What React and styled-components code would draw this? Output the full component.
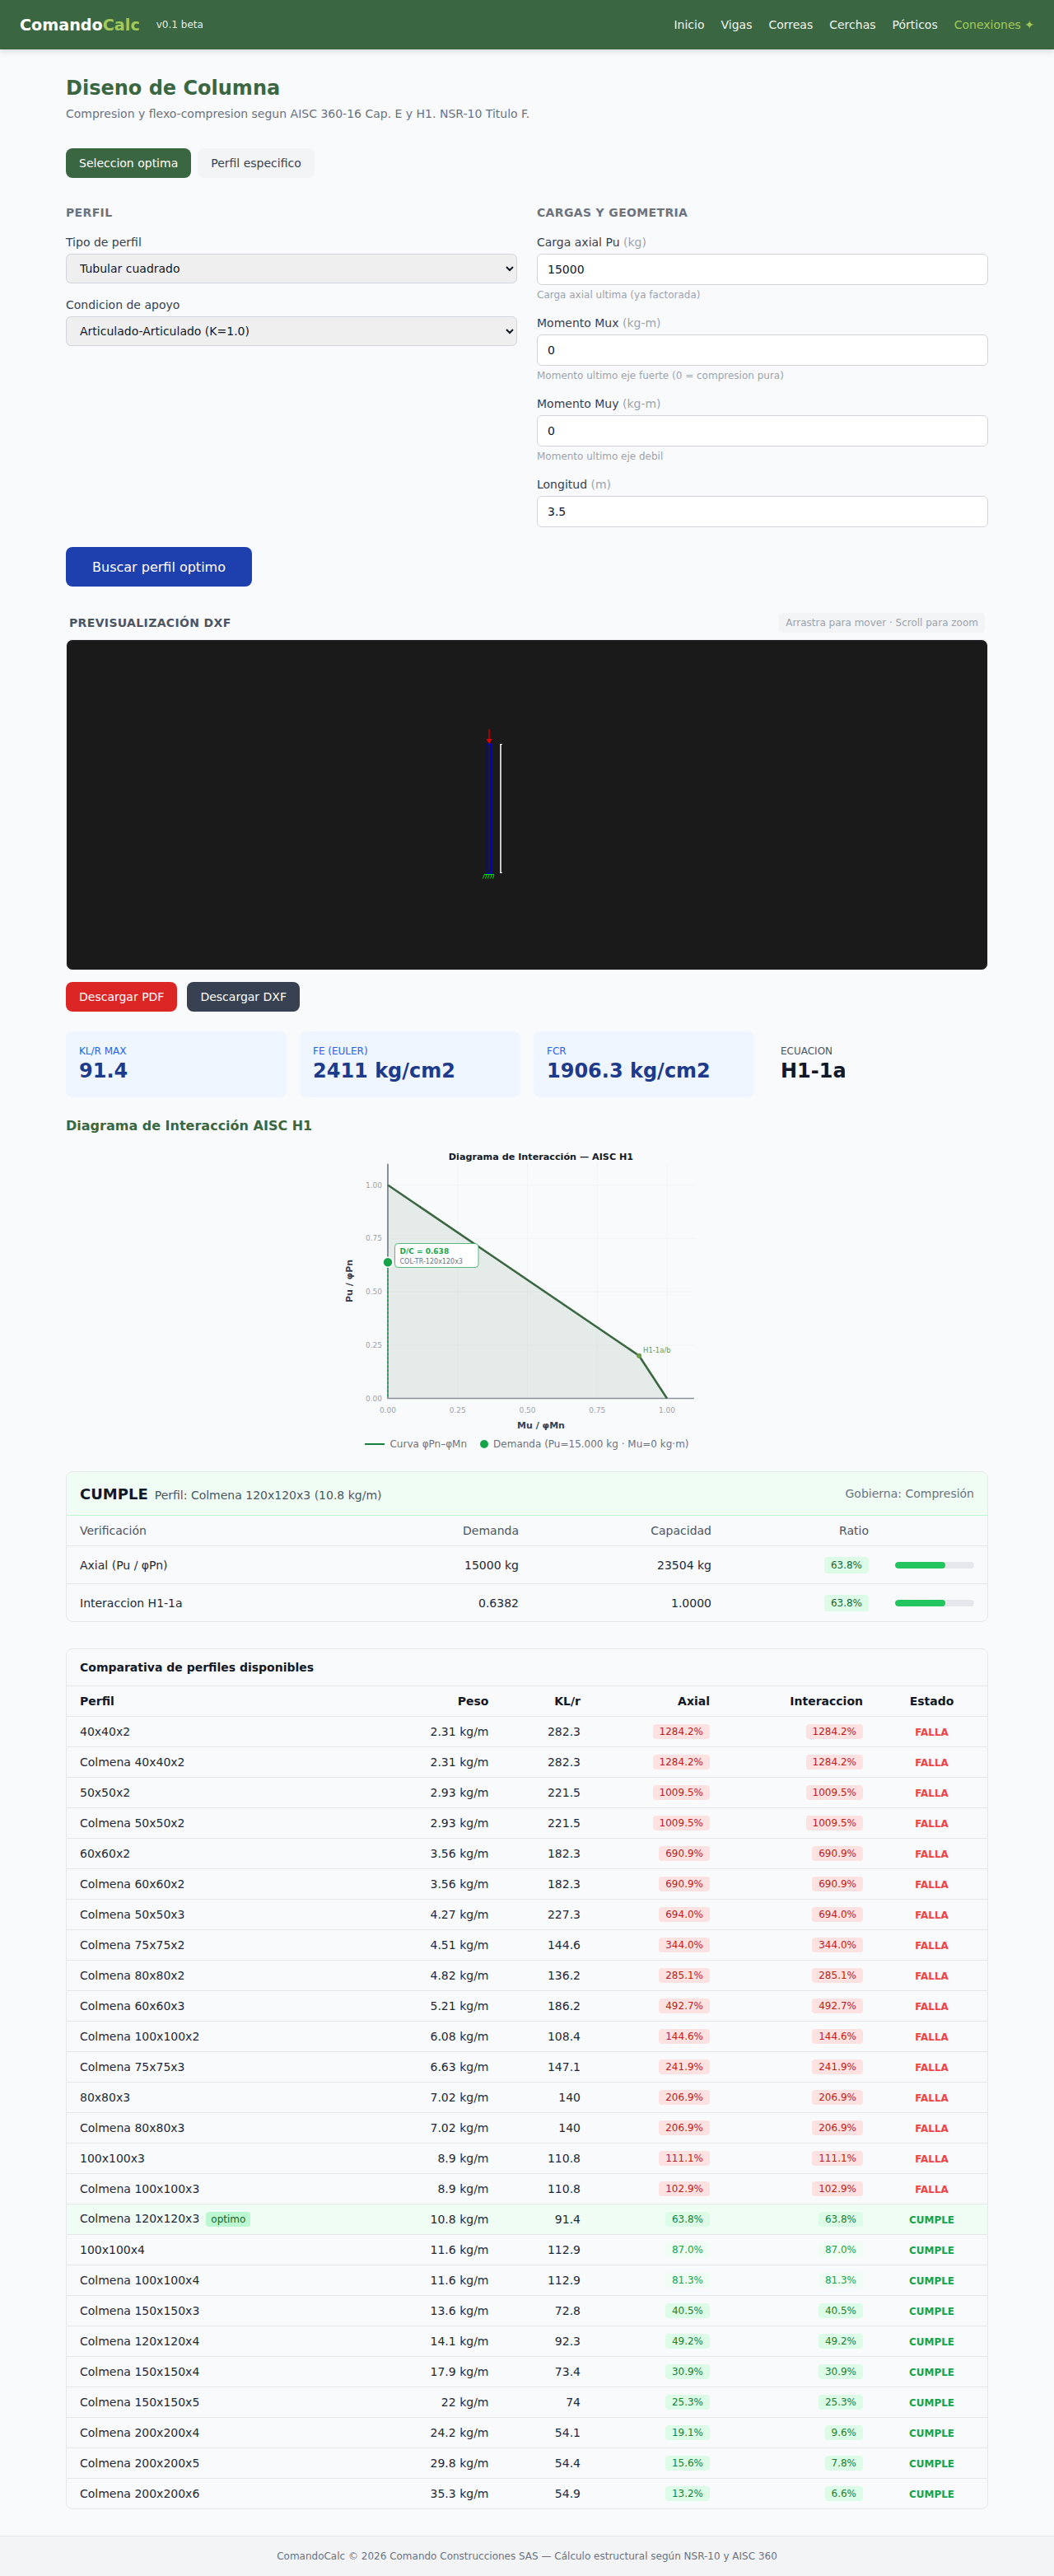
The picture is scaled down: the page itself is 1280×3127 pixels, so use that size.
import React from "react";
import styled, { createGlobalStyle } from "styled-components";

const GlobalStyle = createGlobalStyle`
  * {
    box-sizing: border-box;
  }
  body {
    margin: 0;
    background: #f9fafb;
    color: #111827;
    font-family: "DejaVu Sans", sans-serif;
  }
`;

const profiles = [
  ["40x40x2", "2.31", "282.3", 1284.2, 1284.2],
  ["Colmena 40x40x2", "2.31", "282.3", 1284.2, 1284.2],
  ["50x50x2", "2.93", "221.5", 1009.5, 1009.5],
  ["Colmena 50x50x2", "2.93", "221.5", 1009.5, 1009.5],
  ["60x60x2", "3.56", "182.3", 690.9, 690.9],
  ["Colmena 60x60x2", "3.56", "182.3", 690.9, 690.9],
  ["Colmena 50x50x3", "4.27", "227.3", 694.0, 694.0],
  ["Colmena 75x75x2", "4.51", "144.6", 344.0, 344.0],
  ["Colmena 80x80x2", "4.82", "136.2", 285.1, 285.1],
  ["Colmena 60x60x3", "5.21", "186.2", 492.7, 492.7],
  ["Colmena 100x100x2", "6.08", "108.4", 144.6, 144.6],
  ["Colmena 75x75x3", "6.63", "147.1", 241.9, 241.9],
  ["80x80x3", "7.02", "140", 206.9, 206.9],
  ["Colmena 80x80x3", "7.02", "140", 206.9, 206.9],
  ["100x100x3", "8.9", "110.8", 111.1, 111.1],
  ["Colmena 100x100x3", "8.9", "110.8", 102.9, 102.9],
  ["Colmena 120x120x3", "10.8", "91.4", 63.8, 63.8, true],
  ["100x100x4", "11.6", "112.9", 87.0, 87.0],
  ["Colmena 100x100x4", "11.6", "112.9", 81.3, 81.3],
  ["Colmena 150x150x3", "13.6", "72.8", 40.5, 40.5],
  ["Colmena 120x120x4", "14.1", "92.3", 49.2, 49.2],
  ["Colmena 150x150x4", "17.9", "73.4", 30.9, 30.9],
  ["Colmena 150x150x5", "22", "74", 25.3, 25.3],
  ["Colmena 200x200x4", "24.2", "54.1", 19.1, 9.6],
  ["Colmena 200x200x5", "29.8", "54.4", 15.6, 7.8],
  ["Colmena 200x200x6", "35.3", "54.9", 13.2, 6.6],
];

function App() {
  return (
    <>
      <GlobalStyle />
      <Header>
        <Brand>
          <Logo>
            Comando<span>Calc</span>
          </Logo>
          <Version>v0.1 beta</Version>
        </Brand>
        <Nav>
          <a>Inicio</a>
          <a>Vigas</a>
          <a>Correas</a>
          <a>Cerchas</a>
          <a>Pórticos</a>
          <NavAccent>Conexiones ✦</NavAccent>
        </Nav>
      </Header>

      <Main>
        <Title>Diseno de Columna</Title>
        <Subtitle>
          Compresion y flexo-compresion segun AISC 360-16 Cap. E y H1. NSR-10
          Titulo F.
        </Subtitle>

        <Tabs>
          <Tab $active>Seleccion optima</Tab>
          <Tab>Perfil especifico</Tab>
        </Tabs>

        <FormGrid>
          <div>
            <SectionLabel>Perfil</SectionLabel>
            <Field>
              <Label>Tipo de perfil</Label>
              <Select defaultValue="tc">
                <option value="tc">Tubular cuadrado</option>
              </Select>
            </Field>
            <Field>
              <Label>Condicion de apoyo</Label>
              <Select defaultValue="aa">
                <option value="aa">Articulado-Articulado (K=1.0)</option>
              </Select>
            </Field>
          </div>
          <div>
            <SectionLabel>Cargas y geometria</SectionLabel>
            <Field>
              <Label>
                Carga axial Pu <Unit>(kg)</Unit>
              </Label>
              <Input defaultValue="15000" />
              <Hint>Carga axial ultima (ya factorada)</Hint>
            </Field>
            <Field>
              <Label>
                Momento Mux <Unit>(kg-m)</Unit>
              </Label>
              <Input defaultValue="0" />
              <Hint>Momento ultimo eje fuerte (0 = compresion pura)</Hint>
            </Field>
            <Field>
              <Label>
                Momento Muy <Unit>(kg-m)</Unit>
              </Label>
              <Input defaultValue="0" />
              <Hint>Momento ultimo eje debil</Hint>
            </Field>
            <Field>
              <Label>
                Longitud <Unit>(m)</Unit>
              </Label>
              <Input defaultValue="3.5" />
            </Field>
          </div>
        </FormGrid>

        <SearchButton>Buscar perfil optimo</SearchButton>

        <PreviewHead>
          <PreviewTitle>Previsualización DXF</PreviewTitle>
          <PreviewHint>Arrastra para mover · Scroll para zoom</PreviewHint>
        </PreviewHead>
        <Canvas>
          <svg width="1118" height="400" viewBox="81 777 1118 400">
            <line x1="594" y1="885" x2="594" y2="898" stroke="#a00000" strokeWidth="2" />
            <polygon points="590.5,897 597.5,897 594,903" fill="#e00000" />
            <rect x="591.5" y="903.5" width="5" height="157" fill="none" stroke="#0000c8" strokeWidth="1.5" />
            <line x1="608" y1="903" x2="608" y2="1060" stroke="#c8c8c8" strokeWidth="2" />
            <line x1="607" y1="903.5" x2="610" y2="903.5" stroke="#ffffff" />
            <line x1="607" y1="1059.5" x2="610" y2="1059.5" stroke="#ffffff" />
            <g stroke="#00e000" strokeWidth="1">
              <line x1="588" y1="1061.5" x2="600" y2="1061.5" />
              <line x1="588" y1="1062" x2="586.5" y2="1066.5" />
              <line x1="591" y1="1062" x2="589.5" y2="1066.5" />
              <line x1="594" y1="1062" x2="592.5" y2="1066.5" />
              <line x1="597" y1="1062" x2="595.5" y2="1066.5" />
              <line x1="600" y1="1062" x2="598.5" y2="1066.5" />
            </g>
          </svg>
        </Canvas>

        <Downloads>
          <DownloadButton $bg="#dc2626">Descargar PDF</DownloadButton>
          <DownloadButton $bg="#374151">Descargar DXF</DownloadButton>
        </Downloads>

        <Stats>
          <Stat>
            <StatLabel>KL/r max</StatLabel>
            <StatValue>91.4</StatValue>
          </Stat>
          <Stat>
            <StatLabel>Fe (Euler)</StatLabel>
            <StatValue>2411 kg/cm2</StatValue>
          </Stat>
          <Stat>
            <StatLabel>Fcr</StatLabel>
            <StatValue>1906.3 kg/cm2</StatValue>
          </Stat>
          <Stat $plain>
            <StatLabel $plain>Ecuacion</StatLabel>
            <StatValue $plain>H1-1a</StatValue>
          </Stat>
        </Stats>

        <DiagramTitle>Diagrama de Interacción AISC H1</DiagramTitle>
        <InteractionChart />
        <Legend>
          <LegendItem>
            <LegendLine />
            Curva φPn–φMn
          </LegendItem>
          <LegendItem>
            <LegendDot />
            Demanda (Pu=15.000 kg · Mu=0 kg·m)
          </LegendItem>
        </Legend>

        <ResultCard>
          <ResultHead>
            <ResultStatus>
              <strong>CUMPLE</strong>
              <span>Perfil: Colmena 120x120x3 (10.8 kg/m)</span>
            </ResultStatus>
            <Governs>Gobierna: Compresión</Governs>
          </ResultHead>
          <CheckTable>
            <colgroup>
              <col />
              <col style={{ width: 155 }} />
              <col style={{ width: 234 }} />
              <col style={{ width: 191 }} />
              <col style={{ width: 128 }} />
            </colgroup>
            <thead>
              <tr>
                <th>Verificación</th>
                <th>Demanda</th>
                <th>Capacidad</th>
                <th>Ratio</th>
                <th />
              </tr>
            </thead>
            <tbody>
              <tr>
                <td>Axial (Pu / φPn)</td>
                <td>15000 kg</td>
                <td>23504 kg</td>
                <td>
                  <CheckPill>63.8%</CheckPill>
                </td>
                <td>
                  <BarTrack>
                    <BarFill style={{ width: "63.8%" }} />
                  </BarTrack>
                </td>
              </tr>
              <tr>
                <td>Interaccion H1-1a</td>
                <td>0.6382</td>
                <td>1.0000</td>
                <td>
                  <CheckPill>63.8%</CheckPill>
                </td>
                <td>
                  <BarTrack>
                    <BarFill style={{ width: "63.8%" }} />
                  </BarTrack>
                </td>
              </tr>
            </tbody>
          </CheckTable>
        </ResultCard>

        <CompareCard>
          <CompareTitle>Comparativa de perfiles disponibles</CompareTitle>
          <CompareTable>
            <colgroup>
              <col />
              <col style={{ width: 128.5 }} />
              <col style={{ width: 111.5 }} />
              <col style={{ width: 157 }} />
              <col style={{ width: 186 }} />
              <col style={{ width: 135 }} />
            </colgroup>
            <thead>
              <tr>
                <th>Perfil</th>
                <th>Peso</th>
                <th>KL/r</th>
                <th>Axial</th>
                <th>Interaccion</th>
                <th>Estado</th>
              </tr>
            </thead>
            <tbody>
              {profiles.map(([name, weight, klr, axial, inter, best]) => (
                <ProfileRow key={name} $best={best}>
                  <td>
                    {name}
                    {best && <BestBadge>optimo</BestBadge>}
                  </td>
                  <td>{weight} kg/m</td>
                  <td>{klr}</td>
                  <td>
                    <RatioPill $value={axial}>{axial.toFixed(1)}%</RatioPill>
                  </td>
                  <td>
                    <RatioPill $value={inter}>{inter.toFixed(1)}%</RatioPill>
                  </td>
                  <td>
                    <Status $ok={axial <= 100}>
                      {axial <= 100 ? "CUMPLE" : "FALLA"}
                    </Status>
                  </td>
                </ProfileRow>
              ))}
            </tbody>
          </CompareTable>
        </CompareCard>
      </Main>

      <Footer>
        ComandoCalc © 2026 Comando Construcciones SAS — Cálculo estructural según
        NSR-10 y AISC 360
      </Footer>
    </>
  );
}

// coordinates of the plot inside the 560x350 svg
const px = (v) => 111 + v * 339;
const py = (v) => 307.5 - v * 259;

function InteractionChart() {
  const ticks = [0, 0.25, 0.5, 0.75, 1];
  return (
    <ChartSvg width="560" height="350" viewBox="0 0 560 350">
      <text x="297" y="18" textAnchor="middle" fontSize="11.2" fontWeight="700" fill="#111827">
        Diagrama de Interacción — AISC H1
      </text>
      {ticks.map((t) => (
        <g key={t}>
          {t > 0 && (
            <>
              <line x1={px(t)} y1="22.7" x2={px(t)} y2="307.5" stroke="#f3f4f6" />
              <line x1="111" y1={py(t)} x2="483" y2={py(t)} stroke="#f3f4f6" />
            </>
          )}
          <text x={px(t)} y="325" textAnchor="middle" fontSize="9" fill="#9ca3af">
            {t.toFixed(2)}
          </text>
          <text x="104" y={py(t) + 3} textAnchor="end" fontSize="9" fill="#9ca3af">
            {t.toFixed(2)}
          </text>
        </g>
      ))}
      <polygon
        points={`${px(0)},${py(1)} ${px(0.9)},${py(0.2)} ${px(1)},${py(0)} ${px(0)},${py(0)}`}
        fill="#3a6741"
        fillOpacity="0.1"
      />
      <line x1="111" y1="22.7" x2="111" y2="307.5" stroke="#8a8f9c" strokeWidth="2" />
      <line x1="111" y1="307.5" x2="483" y2="307.5" stroke="#8a8f9c" strokeWidth="1.5" />
      <polyline
        points={`${px(0)},${py(1)} ${px(0.9)},${py(0.2)} ${px(1)},${py(0)}`}
        fill="none"
        stroke="#3a6741"
        strokeWidth="2.5"
      />
      <line x1="111" y1={py(0.638)} x2="111" y2="307.5" stroke="#16a34a" strokeWidth="1.5" strokeDasharray="3 2" />
      <circle cx={px(0.9)} cy={py(0.2)} r="3" fill="#6a9a4a" />
      <text x="421" y="252" fontSize="8.5" fill="#6a9a4a">
        H1-1a/b
      </text>
      <circle cx="111" cy={py(0.638)} r="6" fill="#16a34a" stroke="#fff" strokeWidth="1.5" />
      <rect x="119.5" y="119.5" width="101.5" height="29" rx="4" fill="#fff" stroke="#16a34a" strokeOpacity="0.7" />
      <text x="125.5" y="132" fontSize="9" fontWeight="700" fill="#16a34a">
        D/C = 0.638
      </text>
      <text x="125.5" y="143.5" fontSize="8" fill="#6b7280">
        COL-TR-120x120x3
      </text>
      <text x="297" y="344" textAnchor="middle" fontSize="11" fontWeight="700" fill="#374151">
        Mu / φMn
      </text>
      <text
        transform={`translate(68 165) rotate(-90)`}
        textAnchor="middle"
        fontSize="11"
        fontWeight="700"
        fill="#374151"
      >
        Pu / φPn
      </text>
    </ChartSvg>
  );
}

const Header = styled.header`
  height: 60px;
  background: #3a6741;
  display: flex;
  justify-content: space-between;
  align-items: center;
  padding: 0 24px;
  box-shadow: 0 2px 8px rgba(0, 0, 0, 0.15);
`;
const Brand = styled.div`
  display: flex;
  align-items: center;
  gap: 20px;
`;
const Logo = styled.div`
  color: #fff;
  font-size: 19.2px;
  font-weight: 700;
  span {
    color: #a3c95a;
  }
`;
const Version = styled.span`
  color: rgba(255, 255, 255, 0.9);
  font-size: 12px;
`;
const Nav = styled.nav`
  display: flex;
  gap: 20px;
  font-size: 14px;
  color: #f1f5f1;
`;
const NavAccent = styled.a`
  color: #a3c95a;
`;
const Main = styled.main`
  width: 1120px;
  margin: 0 auto;
  padding: 32px 0;
`;
const Title = styled.h1`
  margin: 0 0 6px;
  font-size: 24px;
  line-height: 30px;
  font-weight: 700;
  color: #3a6741;
`;
const Subtitle = styled.p`
  margin: 0 0 32px;
  font-size: 14px;
  line-height: 20px;
  color: #6b7280;
`;
const Tabs = styled.div`
  display: flex;
  gap: 8px;
  margin-bottom: 32px;
`;
const Tab = styled.button`
  height: 36px;
  padding: 0 16px;
  border: 0;
  border-radius: 8px;
  font: 14px "DejaVu Sans", sans-serif;
  color: ${(p) => (p.$active ? "#fff" : "#374151")};
  background: ${(p) => (p.$active ? "#3a6741" : "#f3f4f6")};
`;
const FormGrid = styled.div`
  display: grid;
  grid-template-columns: 1fr 1fr;
  gap: 24px;
  margin-bottom: 8px;
`;
const SectionLabel = styled.h3`
  margin: 0 0 16px;
  font-size: 14px;
  line-height: 20px;
  font-weight: 700;
  letter-spacing: 0.025em;
  text-transform: uppercase;
  color: #6b7280;
`;
const Field = styled.div`
  margin-bottom: 16px;
`;
const Label = styled.label`
  display: block;
  margin-bottom: 4px;
  font-size: 14px;
  line-height: 20px;
  color: #374151;
`;
const Unit = styled.span`
  color: #9ca3af;
`;
const Select = styled.select`
  display: block;
  width: 100%;
  height: 36px;
  padding: 0 12px;
  border: 1px solid #d1d5db;
  border-radius: 6px;
  font: 14px "DejaVu Sans", sans-serif;
  color: #111827;
`;
const Input = styled.input`
  display: block;
  width: 100%;
  height: 38px;
  padding: 0 12px;
  border: 1px solid #d1d5db;
  border-radius: 6px;
  background: #fff;
  font: 14px "DejaVu Sans", sans-serif;
  color: #111827;
`;
const Hint = styled.div`
  margin-top: 4px;
  font-size: 12px;
  line-height: 16px;
  color: #9ca3af;
`;
const SearchButton = styled.button`
  display: block;
  width: 226px;
  height: 48px;
  border: 0;
  border-radius: 8px;
  background: #1e40af;
  color: #fff;
  font: 16px "DejaVu Sans", sans-serif;
`;
const PreviewHead = styled.div`
  display: flex;
  justify-content: space-between;
  align-items: center;
  padding: 0 4px;
  margin: 32px 0 8px;
`;
const PreviewTitle = styled.span`
  font-size: 14px;
  font-weight: 700;
  letter-spacing: 0.025em;
  text-transform: uppercase;
  color: #4b5563;
`;
const PreviewHint = styled.span`
  height: 24px;
  line-height: 24px;
  padding: 0 8px;
  border-radius: 4px;
  background: #f3f4f6;
  font-size: 12px;
  color: #9ca3af;
`;
const Canvas = styled.div`
  height: 402px;
  border: 1px solid #e5e7eb;
  border-radius: 8px;
  background: #1a1a1a;
  overflow: hidden;
  svg {
    display: block;
  }
`;
const Downloads = styled.div`
  display: flex;
  gap: 12px;
  margin: 14px 0 24px;
`;
const DownloadButton = styled.button`
  height: 36px;
  padding: 0 16px;
  border: 0;
  border-radius: 8px;
  background: ${(p) => p.$bg};
  color: #fff;
  font: 14px "DejaVu Sans", sans-serif;
`;
const Stats = styled.div`
  display: grid;
  grid-template-columns: repeat(4, 1fr);
  gap: 16px;
  margin-bottom: 23px;
`;
const Stat = styled.div`
  height: 80px;
  padding: 16px;
  border-radius: 8px;
  background: ${(p) => (p.$plain ? "transparent" : "#eff6ff")};
`;
const StatLabel = styled.div`
  font-size: 12px;
  line-height: 16px;
  text-transform: uppercase;
  color: ${(p) => (p.$plain ? "#4b5563" : "#2563eb")};
`;
const StatValue = styled.div`
  font-size: 24px;
  line-height: 32px;
  font-weight: 700;
  color: ${(p) => (p.$plain ? "#111827" : "#1e3a8a")};
`;
const DiagramTitle = styled.h3`
  margin: 0 0 11px;
  font-size: 16px;
  line-height: 24px;
  font-weight: 700;
  color: #3a6741;
`;
const ChartSvg = styled.svg`
  display: block;
  margin: 0 auto;
  font-family: "DejaVu Sans", sans-serif;
`;
const Legend = styled.div`
  display: flex;
  justify-content: center;
  gap: 16px;
  margin: 5px 0 25px;
  font-size: 12px;
  line-height: 16px;
  color: #6b7280;
`;
const LegendItem = styled.span`
  display: flex;
  align-items: center;
  gap: 6px;
`;
const LegendLine = styled.i`
  display: block;
  width: 24px;
  height: 2px;
  background: #15803d;
`;
const LegendDot = styled.i`
  display: block;
  width: 10px;
  height: 10px;
  border-radius: 50%;
  background: #16a34a;
`;
const ResultCard = styled.section`
  border: 1px solid #e5e7eb;
  border-radius: 8px;
  overflow: hidden;
  margin-bottom: 32px;
`;
const ResultHead = styled.div`
  height: 53px;
  padding: 0 16px;
  display: flex;
  justify-content: space-between;
  align-items: center;
  background: #f0fdf4;
  border-bottom: 1px solid #bbf7d0;
`;
const ResultStatus = styled.div`
  display: flex;
  align-items: baseline;
  gap: 8px;
  font-size: 14px;
  color: #4b5563;
  strong {
    font-size: 18px;
    color: #111827;
  }
`;
const Governs = styled.span`
  font-size: 14px;
  color: #6b7280;
`;
const CheckTable = styled.table`
  width: 100%;
  table-layout: fixed;
  border-collapse: separate;
  border-spacing: 0;
  font-size: 14px;
  th,
  td {
    padding: 0 16px;
    text-align: right;
    font-weight: 400;
    border-bottom: 1px solid #e5e7eb;
  }
  th:first-child,
  td:first-child {
    text-align: left;
  }
  th {
    height: 37px;
    color: #4b5563;
  }
  td {
    height: 46px;
    color: #1f2937;
  }
  tr:last-child td {
    height: 45px;
    border-bottom: 0;
  }
`;
const CheckPill = styled.span`
  display: inline-block;
  padding: 0 8px;
  height: 20px;
  line-height: 20px;
  border-radius: 4px;
  background: #dcfce7;
  color: #166534;
  font-size: 12px;
`;
const BarTrack = styled.div`
  width: 96px;
  height: 8px;
  border-radius: 4px;
  background: #e5e7eb;
  overflow: hidden;
`;
const BarFill = styled.div`
  height: 100%;
  border-radius: 4px;
  background: #22c55e;
`;
const CompareCard = styled.section`
  border: 1px solid #e5e7eb;
  border-radius: 8px;
  overflow: hidden;
`;
const CompareTitle = styled.h3`
  margin: 0;
  height: 45px;
  padding: 0 16px;
  display: flex;
  align-items: center;
  font-size: 14px;
  font-weight: 700;
  color: #111827;
  border-bottom: 1px solid #e5e7eb;
`;
const CompareTable = styled.table`
  width: 100%;
  table-layout: fixed;
  border-collapse: separate;
  border-spacing: 0;
  font-size: 14px;
  th,
  td {
    height: 37px;
    padding: 0 16px;
    text-align: right;
    border-bottom: 1px solid #e5e7eb;
    color: #1f2937;
  }
  th {
    color: #111827;
  }
  th:first-child,
  td:first-child {
    text-align: left;
  }
  th:last-child,
  td:last-child {
    text-align: center;
  }
  tbody tr:last-child td {
    border-bottom: 0;
    height: 36px;
  }
`;
const ProfileRow = styled.tr`
  background: ${(p) => (p.$best ? "#f0fdf4" : "transparent")};
`;
const BestBadge = styled.span`
  display: inline-block;
  height: 18px;
  line-height: 18px;
  margin-left: 8px;
  padding: 0 6px;
  border-radius: 4px;
  background: #bbf7d0;
  color: #166534;
  font-size: 12px;
`;
const RatioPill = styled.span`
  display: inline-block;
  height: 18px;
  line-height: 18px;
  padding: 0 8px;
  border-radius: 4px;
  font-size: 12px;
  background: ${(p) =>
    p.$value > 100 ? "#fee2e2" : p.$value >= 70 ? "#f0fdf4" : "#dcfce7"};
  color: ${(p) =>
    p.$value > 100 ? "#b91c1c" : p.$value >= 70 ? "#16a34a" : "#15803d"};
`;
const Status = styled.span`
  font-size: 12px;
  font-weight: 700;
  color: ${(p) => (p.$ok ? "#16a34a" : "#ef4444")};
`;
const Footer = styled.footer`
  height: 49px;
  border-top: 1px solid #e5e7eb;
  background: #f3f4f6;
  display: flex;
  align-items: center;
  justify-content: center;
  font-size: 12px;
  color: #6b7280;
`;

export default App;
